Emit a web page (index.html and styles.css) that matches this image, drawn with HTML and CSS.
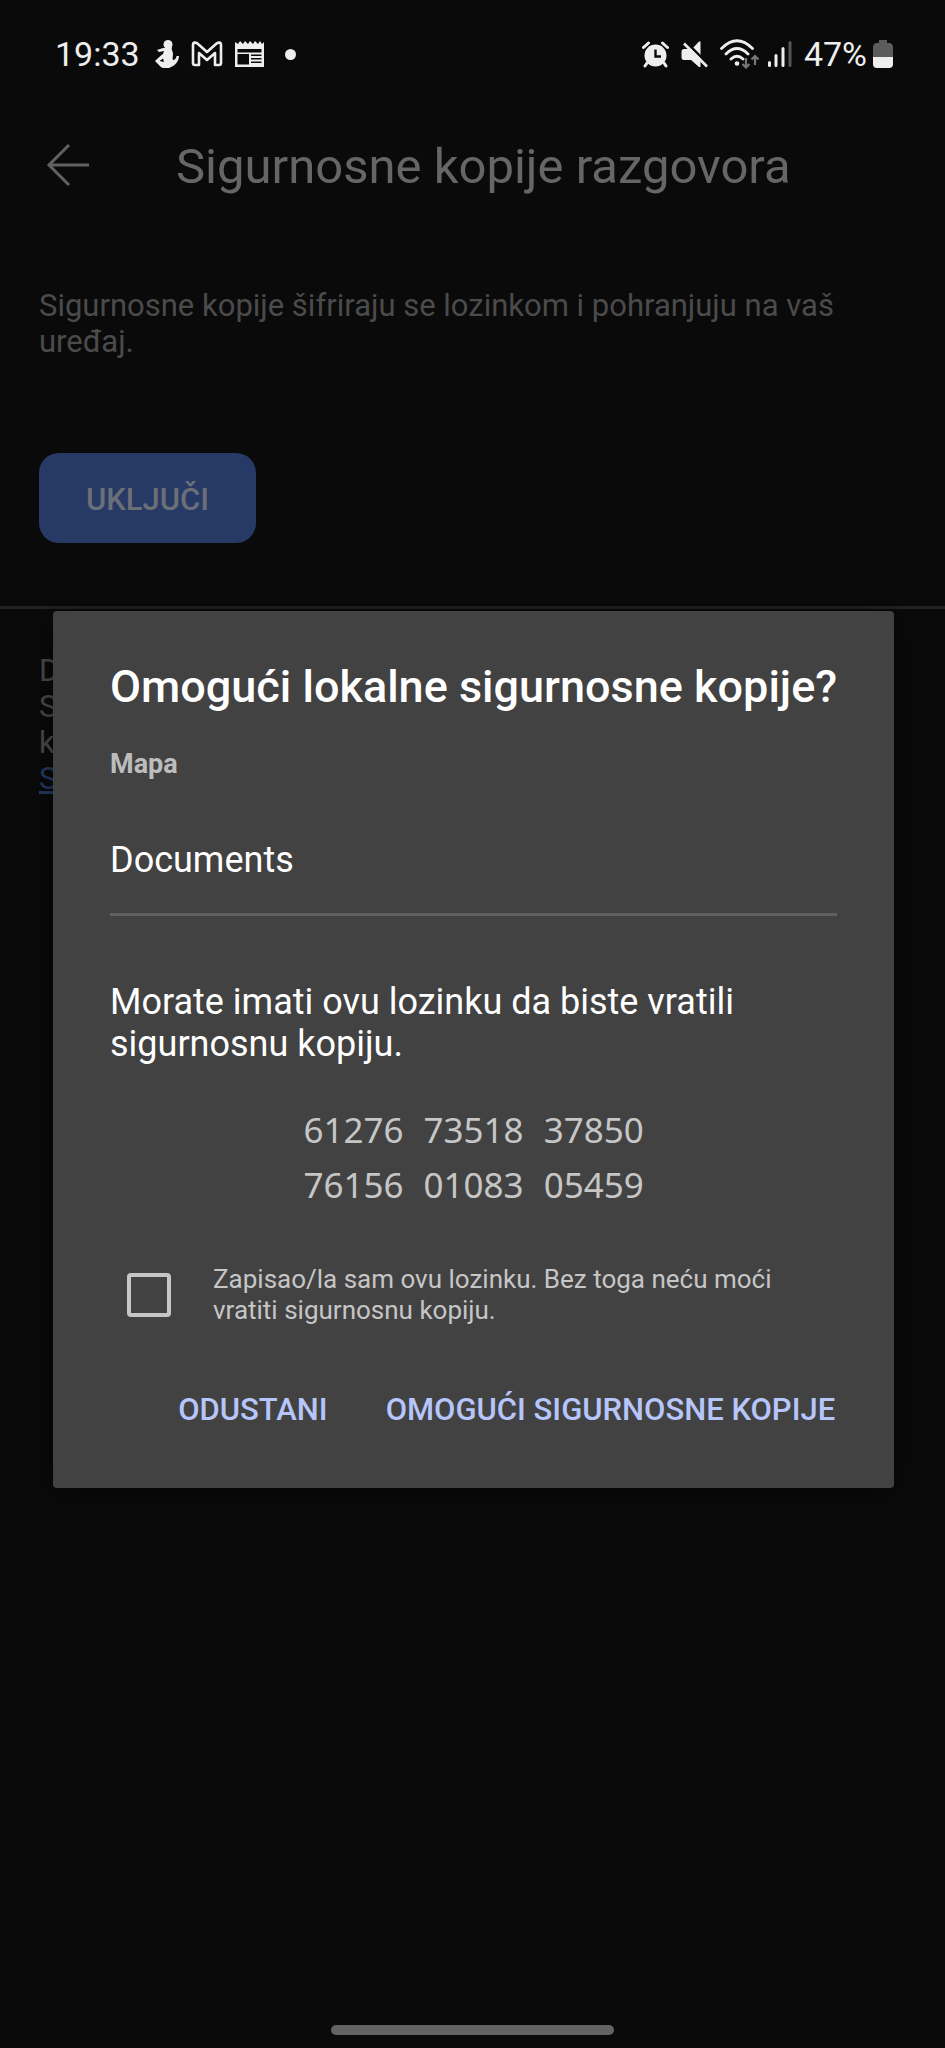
FILE: index.html
```html
<!DOCTYPE html>
<html lang="hr">
<head>
<meta charset="utf-8">
<meta name="viewport" content="width=device-width, initial-scale=1">
<title>Sigurnosne kopije razgovora</title>
<link rel="stylesheet" href="styles.css">
</head>
<body>
<div class="screen">
  <header class="status">
    <div class="status-side">
      <span class="status-text">19:33</span>
      <svg class="icon-figure" width="24" height="28" viewBox="0 0 24 28" aria-hidden="true">
        <circle cx="13" cy="4.500" r="4.500" fill="#eee"/>
        <path d="M9.500 8 L17 7 C16 10 18 11 18 14 C18 17 17 18 18 20 C20 20 21.500 18 21.500 16 L24 16 C24 21 20 26 14 28 L9 28 C6 28 5 26 3 24 L0 21 C3 18 5 16 8 14 L9 11 L4 12 L2 10 L8 8 Z" fill="#eee"/>
        <path d="M4.500 21 L8 18.500 L9 22 Z" fill="#0a0a0a"/>
      </svg>
      <svg class="icon-mail" width="32" height="26" viewBox="0 0 32 26" aria-hidden="true">
        <path d="M2 22 V4 C2 1 5 1 7 3 L16 11 L25 3 C27 1 30 1 30 4 V22 Q30 24 28 24 H24 V12 L16 19 L8 12 V24 H4 Q2 24 2 22 Z" fill="none" stroke="#eee" stroke-width="2.600" stroke-linejoin="round"/>
      </svg>
      <svg class="icon-news" width="29" height="27" viewBox="0 0 29 27" aria-hidden="true">
        <path d="M0 1 L3 3 L5 0 L8 3 L10 0 L13 3 L15 0 L18 3 L20 0 L23 3 L25 0 L27 3 L29 1 V26 H0 Z" fill="#eee"/>
        <path d="M2.500 8 H26.500 V11.500 H2.500 Z M2.500 13 H14 V23.500 H2.500 Z M16 13.500 H26.500 V15 H16 Z M16 17 H26.500 V18.500 H16 Z M16 20.500 H26.500 V22 H16 Z" fill="#0a0a0a"/>
      </svg>
      <span class="status-dot"></span>
    </div>
    <div class="status-side status-end">
      <svg class="icon-alarm" width="27" height="27" viewBox="0 0 27 27" aria-hidden="true">
        <circle cx="13.500" cy="14.500" r="11" fill="#eee"/>
        <path d="M1.500 6.500 L6.500 2 M25.500 6.500 L20.500 2 M5 22 L3 25 M22 22 L24 25" stroke="#eee" stroke-width="3" stroke-linecap="round"/>
        <path d="M13.500 8.500 V15.500 H19" fill="none" stroke="#0a0a0a" stroke-width="2.400"/>
      </svg>
      <svg class="icon-mute" width="27" height="27" viewBox="0 0 27 27" aria-hidden="true">
        <path d="M11 8 L18 0.500 H19.500 V26 H18 L10 19 H3 Q0.500 19 0.500 16 V11 Q0.500 8 3 8 Z" fill="#eee"/>
        <path d="M5 1 L28 24" stroke="#0a0a0a" stroke-width="2.500"/>
        <path d="M3 2.500 L26 25.500" stroke="#eee" stroke-width="2.600"/>
      </svg>
      <svg class="icon-wifi" width="40" height="30" viewBox="0 0 40 30" aria-hidden="true">
        <path d="M1.500 9.500 Q17 -6 32.500 9.500 M6 15 Q17 4 28 15 M11 20 Q17 14.500 23 20" fill="none" stroke="#eee" stroke-width="2.800" stroke-linecap="round"/>
        <circle cx="17" cy="24.500" r="2.300" fill="#eee"/>
        <path d="M26 19 V28 M22.500 25 L26 28.500 L29.500 25 M35 26 V17 M31.500 20.500 L35 17 L38.500 20.500" fill="none" stroke="#777" stroke-width="2.200"/>
      </svg>
      <svg class="icon-signal" width="24" height="26" viewBox="0 0 24 26" aria-hidden="true">
        <path d="M1.500 21.500 V24.500 M8 14.500 V24.500 M15 7.500 V24.500" stroke="#eee" stroke-width="3" stroke-linecap="round"/>
        <path d="M22 1.500 V24.500" stroke="#555" stroke-width="3" stroke-linecap="round"/>
      </svg>
      <span class="status-text">47%</span>
      <svg class="icon-battery" width="20" height="28" viewBox="0 0 20 28" aria-hidden="true">
        <path d="M6 0 H14 V3 H17 Q20 4 20 7 V17 H0 V7 Q0 4 3 3 H6 Z" fill="#5c5c5c"/>
        <path d="M0 17 H20 V24 Q20 28 16 28 H4 Q0 28 0 24 Z" fill="#eee"/>
      </svg>
    </div>
  </header>

  <div class="appbar">
    <button class="back" type="button" aria-label="Natrag">
      <svg width="44" height="44" viewBox="0 0 44 44" aria-hidden="true">
        <path d="M43 22 H3 M23 2 L3 22 L23 42" fill="none" stroke="#616161" stroke-width="3"/>
      </svg>
    </button>
    <h1 class="page-title">Sigurnosne kopije razgovora</h1>
  </div>

  <main class="page">
    <section class="intro">
      <p class="muted">Sigurnosne kopije šifriraju se lozinkom i pohranjuju na vaš uređaj.</p>
      <button class="enable" type="button">UKLJUČI</button>
    </section>
    <section class="more">
      <p class="muted">D<br>S<br>k<br><a class="link" href="#">S</a></p>
    </section>
  </main>

  <footer class="nav"><span class="nav-handle"></span></footer>
</div>

<div class="overlay">
  <form class="dialog" role="dialog" aria-labelledby="dialog-title">
    <h2 class="dialog-title" id="dialog-title">Omogući lokalne sigurnosne kopije?</h2>
    <label class="field-label" for="folder">Mapa</label>
    <input class="field" id="folder" type="text" value="Documents" readonly>
    <p class="message">Morate imati ovu lozinku da biste vratili sigurnosnu kopiju.</p>
    <div class="code">
      <span>61276</span><span>73518</span><span>37850</span>
      <span>76156</span><span>01083</span><span>05459</span>
    </div>
    <div class="confirm">
      <input class="check" id="confirm" type="checkbox">
      <label class="confirm-label" for="confirm">Zapisao/la sam ovu lozinku. Bez toga neću moći vratiti sigurnosnu kopiju.</label>
    </div>
    <div class="actions">
      <button class="action" type="button">ODUSTANI</button>
      <button class="action" type="button">OMOGUĆI SIGURNOSNE KOPIJE</button>
    </div>
  </form>
</div>
</body>
</html>
```

FILE: styles.css
```css
* {
  box-sizing: border-box;
}

body {
  margin: 0;
  background: #0a0a0a;
  color: #fff;
  font-family: Roboto, "Noto Sans", sans-serif;
}

h1, h2, p {
  margin: 0;
}

button {
  border: 0;
  padding: 0;
  background: none;
  font-family: inherit;
}

svg {
  display: block;
  flex: none;
}

.screen {
  display: flex;
  flex-direction: column;
  min-height: 100vh;
}

/* Status bar */
.status {
  display: flex;
  justify-content: space-between;
  align-items: center;
  height: 108px;
  padding: 0 52px 0 55px;
}

.status-side {
  display: flex;
  align-items: center;
  gap: 12px;
}

.status-text {
  color: #eee;
  font-size: 34px;
  line-height: 40px;
}

.icon-figure {
  margin-left: 3px;
}

.status-dot {
  width: 11px;
  height: 11px;
  margin-left: 9px;
  border-radius: 50%;
  background: #eee;
}

.icon-wifi {
  margin-right: -4px;
}

.icon-battery {
  margin-left: -6px;
}

/* App bar */
.appbar {
  display: flex;
  align-items: center;
  gap: 86px;
  height: 114px;
  padding: 0 46px;
}

.page-title {
  padding-top: 4px;
  color: #666;
  font-size: 49px;
  font-weight: 400;
  line-height: 60px;
}

/* Page */
.page {
  flex: 1;
}

.intro {
  padding: 66px 39px 63px;
  border-bottom: 3px solid #222;
}

.muted {
  color: #4b4b4b;
  font-size: 31px;
  line-height: 36px;
}

.enable {
  display: block;
  margin-top: 93px;
  padding: 2px 47px 0;
  height: 90px;
  border-radius: 20px;
  background: #263a65;
  color: #6b6f78;
  font-size: 31px;
  font-weight: 500;
}

.more {
  padding: 44px 39px;
}

.link {
  color: #263a65;
}

.nav {
  display: flex;
  justify-content: center;
  padding-bottom: 13px;
}

.nav-handle {
  width: 30%;
  height: 10px;
  border-radius: 5px;
  background: #636363;
}

/* Dialog */
.overlay {
  position: absolute;
  inset: 0;
  display: flex;
  align-items: center;
  padding: 80px 52px 30px 53px;
}

.dialog {
  flex: 1;
  padding: 46px 57px 38px;
  border-radius: 4px;
  background: #424242;
  box-shadow: 0 4px 32px rgba(0, 0, 0, 0.5);
}

.dialog-title {
  font-size: 45px;
  font-weight: 500;
  line-height: 60px;
  white-space: nowrap;
}

.field-label {
  display: block;
  margin-top: 32px;
  color: #bdbdbd;
  font-size: 27px;
  font-weight: 700;
  line-height: 30px;
}

.field {
  display: block;
  width: 100%;
  height: 113px;
  margin-top: 24px;
  padding: 4px 0 0;
  border: 0;
  border-bottom: 3px solid #606060;
  background: none;
  color: #fff;
  font-family: inherit;
  font-size: 36px;
}

.message {
  margin-top: 65px;
  font-size: 36px;
  line-height: 42px;
}

.code {
  display: grid;
  grid-template-columns: repeat(3, max-content);
  justify-content: center;
  column-gap: 20px;
  margin-top: 37px;
  color: #c6c6c6;
  font-family: "Noto Sans", sans-serif;
  font-size: 35px;
  line-height: 55px;
}

.confirm {
  display: flex;
  align-items: center;
  gap: 42px;
  margin-top: 52px;
  padding-left: 17px;
}

.check {
  flex: none;
  appearance: none;
  width: 44px;
  height: 44px;
  margin: 0;
  border: 4px solid #c6c6c6;
  border-radius: 4px;
}

.confirm-label {
  color: #c6c6c6;
  font-size: 26px;
  line-height: 31px;
}

.actions {
  display: flex;
  justify-content: flex-end;
  gap: 58px;
  margin-top: 44px;
  padding-right: 2px;
}

.action {
  color: #b6c5fa;
  font-size: 31px;
  font-weight: 500;
  line-height: 80px;
}
```
